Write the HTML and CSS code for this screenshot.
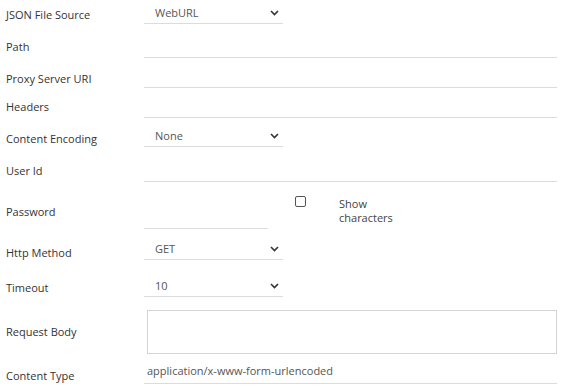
FILE: index.html
```html
<!DOCTYPE html>
<html>
<head>
<meta charset="utf-8">
<link rel="stylesheet" href="styles.css">
</head>
<body>
<form class="form">
  <div class="row r30">
    <label class="lbl">JSON File Source</label>
    <div class="select"><span>WebURL</span><svg class="chev" width="9" height="6" viewBox="0 0 9 6"><path d="M1 1l3.5 3.5L8 1" fill="none" stroke="#333" stroke-width="1.6"/></svg></div>
  </div>
  <div class="row r34">
    <label class="lbl">Path</label>
    <div class="input wide"></div>
  </div>
  <div class="row r30">
    <label class="lbl">Proxy Server URI</label>
    <div class="input wide"></div>
  </div>
  <div class="row r30">
    <label class="lbl up2">Headers</label>
    <div class="input wide"></div>
  </div>
  <div class="row r29">
    <label class="lbl">Content Encoding</label>
    <div class="select"><span>None</span><svg class="chev" width="9" height="6" viewBox="0 0 9 6"><path d="M1 1l3.5 3.5L8 1" fill="none" stroke="#333" stroke-width="1.6"/></svg></div>
  </div>
  <div class="row r35">
    <label class="lbl">User Id</label>
    <div class="input wide"></div>
  </div>
  <div class="row r47">
    <label class="lbl">Password</label>
    <div class="pw">
      <div class="input short"></div>
      <div class="show">
        <span class="box"></span>
        <span class="show-text">Show characters</span>
      </div>
    </div>
  </div>
  <div class="row r31">
    <label class="lbl down2">Http Method</label>
    <div class="select"><span>GET</span><svg class="chev" width="9" height="6" viewBox="0 0 9 6"><path d="M1 1l3.5 3.5L8 1" fill="none" stroke="#333" stroke-width="1.6"/></svg></div>
  </div>
  <div class="row r37">
    <label class="lbl down3">Timeout</label>
    <div class="select"><span>10</span><svg class="chev" width="9" height="6" viewBox="0 0 9 6"><path d="M1 1l3.5 3.5L8 1" fill="none" stroke="#333" stroke-width="1.6"/></svg></div>
  </div>
  <div class="row r58">
    <label class="lbl">Request Body</label>
    <div class="textarea"></div>
  </div>
  <div class="row r29">
    <label class="lbl">Content Type</label>
    <div class="input wide text">application/x-www-form-urlencoded</div>
  </div>
</form>
</body>
</html>
```

FILE: styles.css
```css
html, body {
  margin: 0;
  padding: 0;
  background: #fff;
}
body {
  font-family: "Open Sans", "Noto Sans", sans-serif;
  font-size: 11px;
  color: #333;
}
.form {
  display: flex;
  flex-direction: column;
  padding-left: 6px;
  width: 551px;
}
.row {
  display: grid;
  grid-template-columns: 138px 1fr;
  box-sizing: border-box;
}
.r29 { height: 29px; }
.r30 { height: 30px; }
.r31 { height: 31px; }
.r34 { height: 34px; }
.r35 { height: 35px; }
.r37 { height: 37px; }
.r47 { height: 47px; }
.r58 { height: 58px; }
.lbl {
  align-self: center;
  line-height: 14px;
  color: #333;
}
.up2 { margin-bottom: 4px; }
.down2 { margin-top: 5px; }
.down3 { margin-top: 7px; }
.select {
  align-self: end;
  margin-bottom: 6px;
  width: 139px;
  height: 22px;
  box-sizing: border-box;
  border-bottom: 1px solid #dcdce0;
  display: flex;
  align-items: center;
  justify-content: space-between;
  padding: 0 4px 1px 11px;
  color: #555;
}
.chev {
  display: block;
  margin-top: 1px;
}
.input {
  align-self: end;
  margin-bottom: 6px;
  height: 24px;
  box-sizing: border-box;
  border-bottom: 1px solid #dcdce0;
}
.wide { width: 413px; }
.short { width: 124px; }
.text {
  color: #555;
  padding-left: 3px;
  line-height: 20px;
  height: 23px;
}
.pw {
  display: flex;
  align-items: flex-start;
}
.pw .input {
  margin-top: 16px;
}
.show {
  display: flex;
  align-items: flex-start;
  margin-left: 27px;
}
.box {
  width: 11px;
  height: 11px;
  box-sizing: border-box;
  border: 1px solid #555;
  border-radius: 2px;
  margin-top: 8px;
}
.show-text {
  width: 60px;
  margin-left: 33px;
  margin-top: 9px;
  line-height: 14px;
  color: #444;
}
.textarea {
  align-self: end;
  margin-bottom: 7px;
  margin-left: 3px;
  width: 410px;
  height: 44px;
  box-sizing: border-box;
  border: 1px solid #d4d4d8;
}
```
